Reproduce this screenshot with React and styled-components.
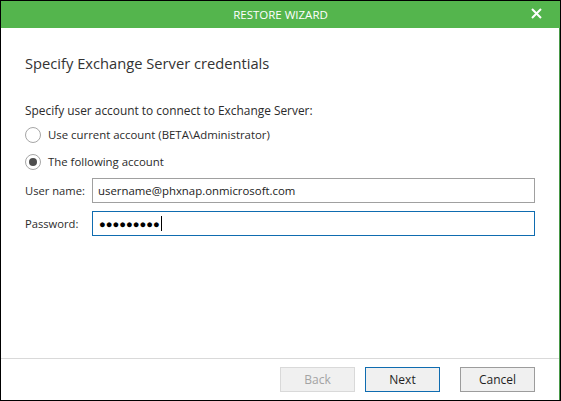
import React from "react";
import styled, { createGlobalStyle } from "styled-components";

const Global = createGlobalStyle`
  html, body { margin: 0; padding: 0; background: #000; }
  * { box-sizing: border-box; }
`;
const Outer = styled.div`
  width: 561px; height: 401px; border: 1px solid #000; display: flex;
`;
const Frame = styled.div`
  flex: 1; min-width: 0; display: flex; flex-direction: column;
  background: #fff; border-right: 1px solid #4a9a4a;
  font-family: "Open Sans", "Liberation Sans", sans-serif; font-size: 12px; color: #2b2b2b;
`;
const TitleBar = styled.header`
  height: 27px; flex: none; background: #54b54d; color: #fff; position: relative; margin-right: -1px;
  display: flex; align-items: center; justify-content: center; font-size: 11.5px;
`;
const Close = styled.svg`position: absolute; right: 18px; top: 7px;`;
const Body = styled.main`flex: 1; padding: 25px 24px 0 23px; display: flex; flex-direction: column;`;
const Heading = styled.h1`margin: 0 0 29px; padding-left: 1px; font-size: 14.7px; font-weight: 400; line-height: 20px; color: #333;`;
const Prompt = styled.div`line-height: 17px; margin-bottom: 7px; font-size: 11.9px; padding-left: 1px;`;
const RadioGroup = styled.div`display: flex; flex-direction: column; gap: 10px; margin-bottom: 8px;`;
const RadioRow = styled.div`display: flex; align-items: center; gap: 7px; height: 17px; font-size: 11.4px;`;
const Radio = styled.span`
  width: 16px; height: 16px; border: 1px solid #a6a6a6; border-radius: 50%; background: #fff; flex: none;
  margin-left: 1px;
  display: flex; align-items: center; justify-content: center;
  &::after { content: ""; width: 8px; height: 8px; border-radius: 50%; background: ${p => p.$on ? "#4d4d4d" : "transparent"}; }
`;
const Field = styled.div`display: flex; align-items: center; height: 25px; margin-bottom: 8px;`;
const Label = styled.label`width: 68px; flex: none; padding-left: 1px; font-size: 11.2px;`;
const Input = styled.div`
  flex: 1; height: 25px; padding-left: 5px; display: flex; align-items: center; font-size: 11.4px; color: #222;
  border: 1px solid ${p => p.$focus ? "#0f6cb0" : "#a0a0a0"};
`;
const Dots = styled.span`font-size: 11.2px; color: #000; margin-left: 1px;`;
const Caret = styled.span`width: 1px; height: 15px; background: #000; margin-left: 1px;`;
const Footer = styled.footer`
  height: 42px; flex: none; border-top: 1px solid #d9d9d9; display: flex; align-items: flex-start;
  justify-content: flex-end; padding: 8px 24px 0 0;
`;
const Button = styled.button`
  width: 75px; height: 25px; padding: 0; font: inherit; border-radius: 0; margin-left: ${p => p.$gap}px;
  background: #f0f0f0;
  color: ${p => p.disabled ? "#a3a3a3" : "#1f1f1f"};
  border: 1px solid ${p => p.disabled ? "#d9d9d9" : p.$primary ? "#0f6cb0" : "#9c9c9c"};
`;

export default function App() {
  return (
    <Outer>
      <Global />
      <Frame>
        <TitleBar>
          RESTORE WIZARD
          <Close width="11" height="11" viewBox="0 0 11 11"><path d="M1 1l9 9M10 1l-9 9" stroke="#fff" strokeWidth="2" /></Close>
        </TitleBar>
        <Body>
          <Heading>Specify Exchange Server credentials</Heading>
          <Prompt>Specify user account to connect to Exchange Server:</Prompt>
          <RadioGroup>
            <RadioRow><Radio />Use current account (BETA\Administrator)</RadioRow>
            <RadioRow><Radio $on />The following account</RadioRow>
          </RadioGroup>
          <Field><Label>User name:</Label><Input>username@phxnap.onmicrosoft.com</Input></Field>
          <Field><Label>Password:</Label><Input $focus><Dots>●●●●●●●●●</Dots><Caret /></Input></Field>
        </Body>
        <Footer>
          <Button disabled $gap={0}>Back</Button>
          <Button $primary $gap={10}>Next</Button>
          <Button $gap={20}>Cancel</Button>
        </Footer>
      </Frame>
    </Outer>
  );
}
